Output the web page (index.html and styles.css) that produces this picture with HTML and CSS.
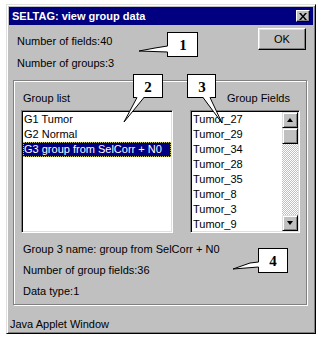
FILE: index.html
```html
<!DOCTYPE html>
<html>
<head>
<meta charset="utf-8">
<link rel="stylesheet" href="styles.css">
</head>
<body>
<div class="window">
  <div class="titlebar">
    <span class="title">SELTAG: view group data</span>
    <span class="close"><svg width="8" height="7" viewBox="0 0 8 7"><path d="M0 0h2l2 2.5L6 0h2L5 3.5 8 7H6L4 4.5 2 7H0l3-3.5z" fill="#000"/></svg></span>
  </div>
  <div class="body">
    <div class="top">
      <div class="counts">
        <div>Number of fields:40</div>
        <div>Number of groups:3</div>
      </div>
      <div class="ok">OK</div>
    </div>
    <div class="groupbox">
      <div class="cols">
        <div class="col">
          <div class="label">Group list</div>
          <div class="list">
            <div class="row">G1 Tumor</div>
            <div class="row">G2 Normal</div>
            <div class="row sel">G3 group from SelCorr + N0</div>
          </div>
        </div>
        <div class="col">
          <div class="label right">Group Fields</div>
          <div class="list fields">
            <div class="items">
              <div class="row">Tumor_27</div>
              <div class="row">Tumor_29</div>
              <div class="row">Tumor_34</div>
              <div class="row">Tumor_28</div>
              <div class="row">Tumor_35</div>
              <div class="row">Tumor_8</div>
              <div class="row">Tumor_3</div>
              <div class="row">Tumor_9</div>
            </div>
            <div class="scrollbar">
              <div class="sbtn"><span class="tri up"></span></div>
              <div class="thumb"></div>
              <div class="track"></div>
              <div class="sbtn"><span class="tri down"></span></div>
            </div>
          </div>
        </div>
      </div>
      <div class="info">
        <div>Group 3 name: group from SelCorr + N0</div>
        <div>Number of group fields:36</div>
        <div>Data type:1</div>
      </div>
    </div>
  </div>
  <div class="status">Java Applet Window</div>
</div>

<svg class="callouts" width="324" height="342" viewBox="0 0 324 342">
  <g class="co">
    <rect x="167.5" y="32.5" width="30" height="24"/>
    <polygon class="fillonly" points="168,46 155,48 139,51 168,52"/>
    <polyline points="167.5,46 155,48 139,51 167.5,52"/>
    <text x="183" y="50">1</text>

    <rect x="133.5" y="74.5" width="29" height="23"/>
    <polygon class="fillonly" points="137,97 144,97 124,122"/>
    <polyline points="137,97.5 124,122 144,97.5"/>
    <text x="148" y="92">2</text>

    <rect x="187.5" y="74.5" width="28" height="23"/>
    <polygon class="fillonly" points="203,97 210,97 222,123"/>
    <polyline points="203,97.5 222,123 210,97.5"/>
    <text x="202" y="92">3</text>

    <rect x="258.5" y="248.5" width="29" height="24"/>
    <polygon class="fillonly" points="259,262 250,263 233,269 259,267"/>
    <polyline points="258.5,262 250,263 233,269 258.5,267"/>
    <text x="273" y="266">4</text>
  </g>
</svg>
</body>
</html>
```
FILE: styles.css
```css
html, body {
  margin: 0;
}
body {
  position: relative;
  width: 324px;
  height: 342px;
  box-sizing: border-box;
  padding: 4px 0 0 6px;
  background: #fff;
  font-family: "Liberation Sans", Arial, sans-serif;
  font-size: 11px;
  color: #000;
  overflow: hidden;
}
.window {
  width: 310px;
  height: 330px;
  box-sizing: border-box;
  background: #c0c0c0;
  border: 1px solid;
  border-color: #dfdfdf #000 #000 #dfdfdf;
  box-shadow: inset 1px 1px #fff, inset -1px -1px #808080;
  padding: 2px;
  display: flex;
  flex-direction: column;
}
.titlebar {
  height: 18px;
  flex: none;
  background: #000080;
  color: #fff;
  display: flex;
  align-items: center;
  justify-content: space-between;
  padding-left: 3px;
}
.title {
  font-weight: bold;
  font-size: 11px;
}
.close {
  width: 14px;
  height: 12px;
  box-sizing: border-box;
  margin-right: 3px;
  background: #c0c0c0;
  border: 1px solid;
  border-color: #fff #000 #000 #fff;
  box-shadow: inset -1px -1px #808080;
  display: flex;
  align-items: center;
  justify-content: center;
}
.body {
  flex: 1;
  padding: 0 6px 0 4px;
}
.top {
  height: 55px;
  display: flex;
  justify-content: space-between;
  align-items: flex-start;
}
.counts {
  padding: 5px 0 0 4px;
  line-height: 22px;
}
.ok {
  margin-top: 3px;
  margin-right: 1px;
  width: 48px;
  height: 22px;
  box-sizing: border-box;
  border: 1px solid;
  border-color: #fff #000 #000 #fff;
  box-shadow: inset -1px -1px #808080, inset 1px 1px #dfdfdf;
  display: flex;
  align-items: center;
  justify-content: center;
}
.groupbox {
  height: 225px;
  box-sizing: border-box;
  border: 1px solid #808080;
  box-shadow: inset 1px 1px #fff, 1px 1px #fff;
  padding: 10px 6px 0 7px;
}
.cols {
  display: grid;
  grid-template-columns: 152px 110px;
  column-gap: 17px;
}
.label {
  height: 14px;
  line-height: 14px;
  margin-bottom: 5px;
  padding-left: 2px;
}
.label.right {
  text-align: right;
  padding: 0 10px 0 0;
}
.list {
  height: 123px;
  box-sizing: border-box;
  background: #fff;
  border: 1px solid;
  border-color: #808080 #fff #fff #808080;
  box-shadow: inset 1px 1px #000, inset -1px -1px #dfdfdf;
  padding: 1px;
  overflow: hidden;
}
.row {
  height: 15px;
  line-height: 15px;
  padding-left: 1px;
  white-space: nowrap;
}
.row.sel {
  background: #000080;
  color: #fff;
  outline: 1px dotted #c0c060;
  outline-offset: -1px;
}
.fields {
  display: flex;
}
.items {
  flex: 1;
}
.scrollbar {
  width: 16px;
  display: flex;
  flex-direction: column;
}
.sbtn, .thumb {
  height: 16px;
  box-sizing: border-box;
  background: #c0c0c0;
  border: 1px solid;
  border-color: #dfdfdf #000 #000 #dfdfdf;
  box-shadow: inset 1px 1px #fff, inset -1px -1px #808080;
  display: flex;
  align-items: center;
  justify-content: center;
}
.track {
  flex: 1;
  background: repeating-conic-gradient(#c0c0c0 0 25%, #fff 0 50%) 0 0 / 2px 2px;
}
.tri {
  width: 0;
  height: 0;
  border-left: 3.5px solid transparent;
  border-right: 3.5px solid transparent;
}
.tri.up {
  border-bottom: 4px solid #000;
}
.tri.down {
  border-top: 4px solid #000;
}
.info {
  margin-top: 6px;
  line-height: 21px;
  padding-left: 2px;
}
.status {
  height: 14px;
  flex: none;
  line-height: 14px;
  padding-left: 1px;
}
.callouts {
  position: absolute;
  top: 0;
  left: 0;
  pointer-events: none;
}
.co rect {
  fill: #fff;
  stroke: #000;
  stroke-width: 1;
}
.co .fillonly {
  fill: #fff;
  stroke: none;
}
.co polyline {
  fill: none;
  stroke: #000;
  stroke-width: 1;
}
.co text {
  font-family: "Liberation Serif", "Times New Roman", serif;
  font-weight: bold;
  font-size: 15px;
  text-anchor: middle;
  fill: #000;
}
```
